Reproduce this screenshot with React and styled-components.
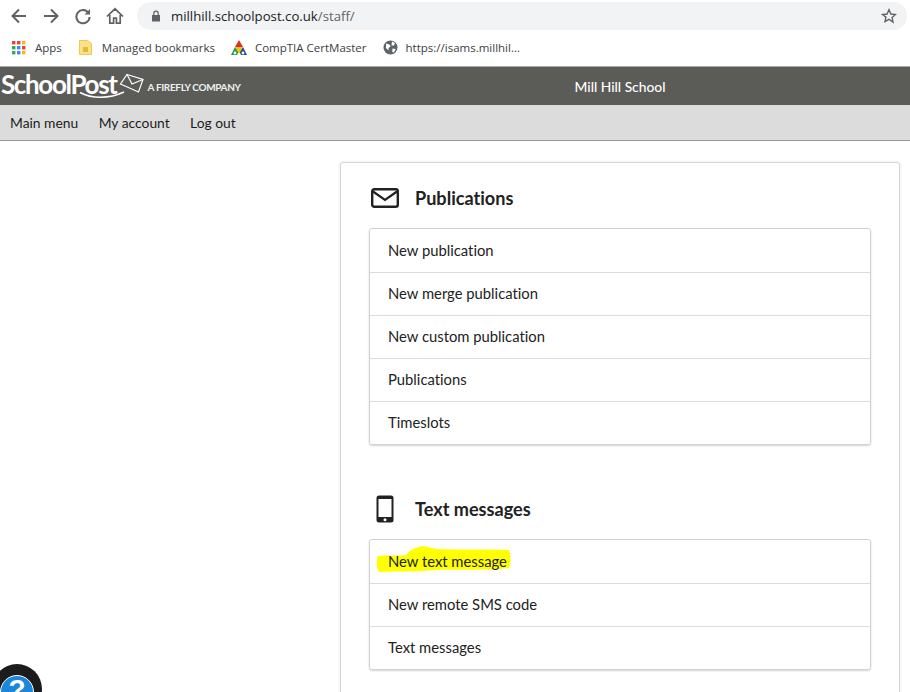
import React from 'react';
import styled, { createGlobalStyle } from 'styled-components';

const GlobalStyle = createGlobalStyle`
html, body {
  margin: 0;
  padding: 0;
  height: 692px;
  overflow: hidden;
  background: #fff;
}
* { box-sizing: border-box; }
`
const Page = styled.div`
width: 910px;
height: 692px;
overflow: hidden;
position: relative;
font-family: Lato, sans-serif;
font-variant-ligatures: none;
color: #222;
`
const Toolbar = styled.div`
height: 31px;
display: flex;
align-items: center;
padding: 1px 3px 0 10px;
`
const NavIcon = styled.svg`
width: 18px;
height: 18px;
margin-right: ${(props) => props.$gap}px;
flex: none;
`
const Omnibox = styled.div`
flex: 1;
height: 28px;
border-radius: 14px;
background: #f1f3f4;
display: flex;
align-items: center;
padding: 0 5px 0 13px;
margin-left: 13px;
font-family: "Open Sans", sans-serif;
font-size: 13.2px;
color: #202124;
`
const Path = styled.span`
color: #5f6368;
`
const Lock = styled.svg`
width: 12px;
height: 12px;
margin-right: 9px;
`
const Star = styled.svg`
width: 16px;
height: 16px;
margin-left: auto;
margin-right: 5px;
`
const Bookmarks = styled.div`
height: 35px;
display: flex;
align-items: center;
padding: 0 0 2px 12px;
font-family: "Open Sans", sans-serif;
font-size: 11.5px;
color: #3c4043;
`
const Bookmark = styled.div`
display: flex;
align-items: center;
gap: ${(props) => props.$gap}px;
margin-right: ${(props) => props.$right}px;
white-space: nowrap;
`
const Header = styled.header`
height: 39px;
background: #5b5c58;
border-top: 1px solid #aaa;
display: flex;
align-items: center;
color: #fff;
position: relative;
`
const Logo = styled.div`
width: 470px;
flex: none;
display: flex;
align-items: center;
padding-left: 1px;
`
const LogoWord = styled.span`
font-family: Lato, sans-serif;
font-size: 26px;
font-weight: 700;
letter-spacing: -1.35px;
line-height: 30px;
position: relative;
top: -2px;
`
const Envelope = styled.svg`
width: 25px;
height: 21px;
margin-left: 2px;
margin-right: 4px;
position: relative;
top: -3px;
flex: none;
`
const Swoosh = styled.svg`
position: absolute;
left: 79px;
top: 24px;
width: 46px;
height: 10px;
`
const Firefly = styled.span`
font-family: Lato, sans-serif;
font-size: 10px;
font-weight: 700;
letter-spacing: -0.35px;
color: #eee;
margin-top: 2px;
white-space: nowrap;
`
const SchoolName = styled.div`
width: 300px;
text-align: center;
font-size: 13.8px;
font-weight: 500;
`
const Nav = styled.nav`
height: 36px;
background: #dcdcdc;
border-bottom: 1px solid #999;
display: flex;
align-items: center;
gap: 20.4px;
padding: 0 0 1px 10px;
font-size: 13.85px;
color: #1c1c1c;
`
const Content = styled.main`
padding: 21px 0 0 340px;
`
const Card = styled.section`
width: 560px;
height: 600px;
background: #fff;
border: 1px solid #d6d6d6;
border-radius: 3px;
box-shadow: 0 0 3px rgba(0,0,0,0.12);
padding: 20px 28px 0;
`
const SectionTitle = styled.div`
height: 30px;
display: flex;
align-items: center;
margin-bottom: 15px;
margin-top: ${(props) => props.$top || 0}px;
font-size: 18.1px;
font-weight: 700;
color: #222;
`
const TitleIcon = styled.div`
width: 46px;
padding-left: ${(props) => props.$inset}px;
display: flex;
`
const List = styled.ul`
list-style: none;
margin: 0;
padding: 0;
border: 1px solid #d2d2d2;
border-radius: 3px;
box-shadow: 0 1px 2px rgba(0,0,0,0.18);
`
const Item = styled.li`
height: 43px;
display: flex;
align-items: center;
padding: 0 18px 2px;
font-size: 14.8px;
color: #222;
position: relative;
& + & {
  border-top: 1px solid #dcdcdc;
}
`
const ItemText = styled.span`
position: relative;
`
const Scribble = styled.svg`
position: absolute;
left: 7px;
top: 5px;
width: 134px;
height: 30px;
`
const HelpButton = styled.div`
position: absolute;
left: -8px;
top: 664px;
width: 50px;
height: 50px;
border-radius: 50%;
background: #1c1c1c;
`
const HelpInner = styled.div`
position: absolute;
left: 8px;
top: 11px;
width: 34px;
height: 34px;
border-radius: 50%;
background: #1c86dc;
border: 1px solid #fff;
color: #fff;
text-align: center;
font-family: "Liberation Sans", sans-serif;
font-size: 28px;
font-weight: 700;
line-height: 28px;
`

const stroke = { fill: 'none', stroke: '#5f6368', strokeWidth: 2 };

const publications = ['New publication', 'New merge publication', 'New custom publication', 'Publications', 'Timeslots'];
const messages = ['New text message', 'New remote SMS code', 'Text messages'];

const App = () => {
  return (
    <Page>
      <GlobalStyle />
      <Toolbar>
        <NavIcon $gap={14} viewBox="0 0 18 18"><path d="M16 9H3M9 2.5L2.5 9 9 15.5" {...stroke} /></NavIcon>
        <NavIcon $gap={14} viewBox="0 0 18 18"><path d="M2 9h13M9 2.5L15.5 9 9 15.5" {...stroke} /></NavIcon>
        <NavIcon $gap={14} viewBox="0 0 18 18"><path d="M14.5 6A6.6 6.6 0 1 0 15.6 10" {...stroke} /><path d="M16 2v5.5h-5.5z" fill="#5f6368" /></NavIcon>
        <NavIcon $gap={0} viewBox="0 0 18 18"><path d="M1 9.5L9 1.8l8 7.7M3.8 8v8.2h3.8v-5h2.8v5h3.8V8" {...stroke} strokeWidth="1.7" /></NavIcon>
        <Omnibox>
          <Lock viewBox="0 0 12 12"><path d="M2 5h8v6.5H2z" fill="#5f6368" /><path d="M3.8 5V3.4a2.2 2.2 0 0 1 4.4 0V5" fill="none" stroke="#5f6368" strokeWidth="1.2" /></Lock>
          <span>millhill.schoolpost.co.uk<Path>/staff/</Path></span>
          <Star viewBox="0 0 16 16"><path d="M8 1.8l1.9 4.2 4.6.5-3.4 3.1.9 4.5L8 11.3l-4 2.3.9-4.5L1.5 6.5l4.6-.5z" fill="none" stroke="#5f6368" strokeWidth="1.4" /></Star>
        </Omnibox>
      </Toolbar>
      <Bookmarks>
        <Bookmark $gap={9} $right={17}>
          <svg width="14" height="14" viewBox="0 0 14 14">
            {[0, 5, 10].map((y, r) => [0, 5, 10].map((x, c) => (
              <rect key={x + '-' + y} x={x} y={y} width="3.4" height="3.4"
                fill={[['#ea4335', '#ea4335', '#fbbc04'], ['#34a853', '#4285f4', '#ea4335'], ['#34a853', '#4285f4', '#fbbc04']][r][c]} />
            )))}
          </svg>
          Apps
        </Bookmark>
        <Bookmark $gap={10} $right={15}>
          <svg width="13" height="15" viewBox="0 0 13 15">
            <path d="M0.5 0.5h8l4 3v11h-12z" fill="#fbe08a" stroke="#f1c84d" />
            <path d="M4 7h5v5H4z" fill="#e3b93c" />
          </svg>
          Managed bookmarks
        </Bookmark>
        <Bookmark $gap={7} $right={16}>
          <svg width="18" height="16" viewBox="0 0 18 16">
            <path d="M9 0l4 7H5z" fill="#e02b2b" />
            <path d="M5 7l-4 8h6l2-4z" fill="#1f9e3c" />
            <path d="M13 7l4 8h-6l-2-4z" fill="#1d4f9c" />
            <path d="M5 7h8l-4 7z" fill="#f1c21b" />
            <circle cx="5" cy="13" r="1.4" fill="#fff" />
            <circle cx="13" cy="13" r="1.4" fill="#fff" />
          </svg>
          CompTIA CertMaster
        </Bookmark>
        <Bookmark $gap={8} $right={0}>
          <svg width="15" height="15" viewBox="0 0 15 15">
            <circle cx="7.5" cy="7.5" r="7" fill="#5f6368" />
            <path d="M3 3.5l3.5 1 1 2-2 1.5v2.5L3 8zM9 1.5l3 1.5-1 2.5H8.5zM9.5 8.5l3.2.5-1.8 3.6-1.6-.6z" fill="#fff" />
          </svg>
          https://isams.millhil...
        </Bookmark>
      </Bookmarks>
      <Header>
        <Logo>
          <LogoWord>SchoolPost</LogoWord>
          <Envelope viewBox="0 0 25 21">
            <path d="M8 1.5L24 6.5 19.5 19 1.5 11z" fill="none" stroke="#fff" strokeWidth="1.2" />
            <path d="M8 1.5L13 11 24 6.5" fill="none" stroke="#fff" strokeWidth="1.2" />
          </Envelope>
          <Firefly>A FIREFLY COMPANY</Firefly>
          <Swoosh viewBox="0 0 46 10"><path d="M1 1.5C13 8 30 8 45 1" fill="none" stroke="#fff" strokeWidth="1.6" /></Swoosh>
        </Logo>
        <SchoolName>Mill Hill School</SchoolName>
      </Header>
      <Nav>
        <span>Main menu</span>
        <span>My account</span>
        <span>Log out</span>
      </Nav>
      <Content>
        <Card>
          <SectionTitle>
            <TitleIcon $inset={2}>
              <svg width="28" height="20" viewBox="0 0 28 20">
                <rect x="1.2" y="1.2" width="25.6" height="17.6" rx="2" fill="none" stroke="#222" strokeWidth="2.4" />
                <path d="M2 3.5L14 12 26 3.5" fill="none" stroke="#222" strokeWidth="2.2" />
              </svg>
            </TitleIcon>
            Publications
          </SectionTitle>
          <List>
            {publications.map((label) => <Item key={label}><ItemText>{label}</ItemText></Item>)}
          </List>
          <SectionTitle $top={49}>
            <TitleIcon $inset={7}>
              <svg width="18" height="28" viewBox="0 0 18 28">
                <rect x="0.5" y="0.5" width="17" height="27" rx="2.5" fill="#222" />
                <rect x="2.5" y="4" width="13" height="18" fill="#fff" />
                <circle cx="9" cy="24.8" r="1.5" fill="#fff" />
              </svg>
            </TitleIcon>
            Text messages
          </SectionTitle>
          <List>
            {messages.map((label, i) => (
              <Item key={label}>
                {i === 0 && (
                  <Scribble viewBox="0 0 134 30">
                    <path d="M1 11C10 10 20 11 30 10C31 6 36 3 44 1.5C50 1 54 3 60 4C84 5 110 4 132 5C134 11 134 18 132 23C108 26 84 24 60 25C40 27 18 26 2 27C-1 22 -1 16 1 11Z" fill="#ffff00" />
                  </Scribble>
                )}
                <ItemText>{label}</ItemText>
              </Item>
            ))}
          </List>
        </Card>
      </Content>
      <HelpButton><HelpInner>?</HelpInner></HelpButton>
    </Page>
  )
}
export default App;
